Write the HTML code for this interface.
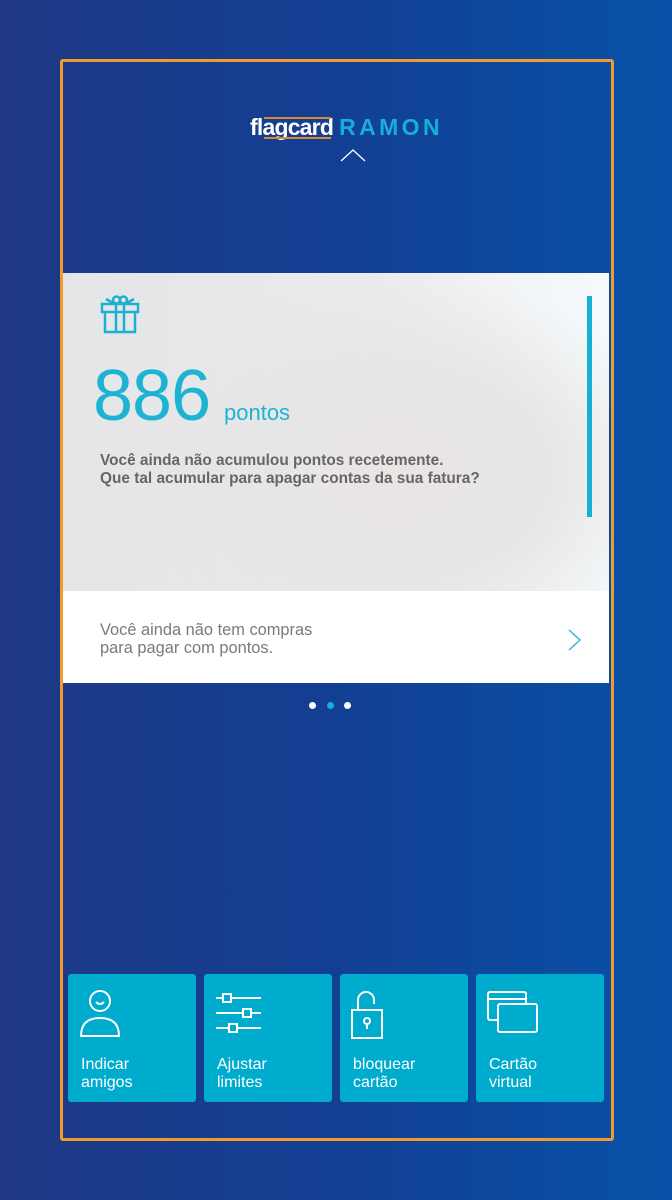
<!DOCTYPE html>
<html><head><meta charset="utf-8"><style>
*{margin:0;padding:0;box-sizing:border-box}
body{width:672px;height:1200px;overflow:hidden;font-family:"Liberation Sans",sans-serif;background:linear-gradient(90deg,#1e3885 0%,#133f93 50%,#0752a8 100%);position:relative}
.frame{position:absolute;left:60px;top:59px;width:554px;height:1082px;border:3px solid #f29a2e;border-radius:3px}
.logo{position:absolute;top:114px;left:250px;white-space:nowrap;font-size:23px;font-weight:bold}
.logo .f{color:#fff;letter-spacing:-0.8px;position:relative}
.logo .f:before{content:"";position:absolute;left:14px;right:2px;top:3px;height:2px;background:#d9892e}
.logo .f:after{content:"";position:absolute;left:14px;right:2px;bottom:1px;height:2px;background:#d9892e}
.logo .r{color:#19aed6;letter-spacing:3.4px;margin-left:6px}
.card{position:absolute;left:63px;top:273px;width:546px;height:318px;background:radial-gradient(ellipse 300px 200px at 330px 200px,#ebe5e4 0%,#e6e6e7 50%,rgba(230,230,232,0) 100%),linear-gradient(90deg,#e4e5e7 0%,#ececee 60%,#f6fafc 100%)}
.bar{position:absolute;left:587px;top:296px;width:5px;height:221px;background:#16b1d2}
.num{position:absolute;left:93px;top:355px;font-size:72px;color:#1db4d3;letter-spacing:-1px}
.pts{position:absolute;left:224px;top:400px;font-size:22px;color:#1db4d3}
.msg{position:absolute;left:100px;top:452px;font-size:15.4px;font-weight:bold;color:#666;line-height:18px;white-space:nowrap}
.white{position:absolute;left:63px;top:591px;width:546px;height:92px;background:#fff}
.wmsg{position:absolute;left:100px;top:621px;font-size:16.4px;color:#7a7a7a;line-height:18px}
.dot{position:absolute;top:702px;width:7px;height:7px;border-radius:50%;background:#fff}
.btn{position:absolute;top:974px;width:128px;height:128px;background:#00acce;border-radius:3px;color:#fff;font-size:16px;line-height:18px}
.btn span{position:absolute;left:13px;top:82px}
.btn svg{position:absolute;left:10px;top:14px}
</style></head><body>
<div class="frame"></div>
<div class="logo"><span class="f">flagcard</span><span class="r">RAMON</span></div>
<svg style="position:absolute;left:340px;top:148px" width="26" height="14"><path d="M1 13 L13 2 L25 13" stroke="#fff" stroke-width="1.3" fill="none"/></svg>
<div class="card"></div>
<svg style="position:absolute;left:99px;top:294px" width="42" height="42" viewBox="0 0 42 42" fill="none" stroke="#1cb0d1" stroke-width="2.5"><rect x="3" y="10" width="36" height="8"/><path d="M6 18 V38 H36 V18 M17 10 V38 M25 10 V38"/><circle cx="17.5" cy="6" r="3.5"/><circle cx="24.5" cy="6" r="3.5"/><path d="M14 9 L7 5 M28 9 L35 5"/></svg>
<div class="bar"></div>
<div class="num">886</div>
<div class="pts">pontos</div>
<div class="msg">Você ainda não acumulou pontos recetemente.<br>Que tal acumular para apagar contas da sua fatura?</div>
<div class="white"></div>
<div class="wmsg">Você ainda não tem compras<br>para pagar com pontos.</div>
<svg style="position:absolute;left:567px;top:628px" width="16" height="24"><path d="M2 2 L13 12 L2 22" stroke="#3bb4d3" stroke-width="1.5" fill="none"/></svg>
<div class="dot" style="left:309px"></div>
<div class="dot" style="left:327px;background:#19aed6"></div>
<div class="dot" style="left:344px"></div>
<div class="btn" style="left:68px"><svg width="44" height="50" viewBox="0 0 44 50" fill="none" stroke="#fff" stroke-width="2"><circle cx="22" cy="13" r="10"/><path d="M18 14 Q22 18 26 14"/><path d="M3 48 Q3 30 22 30 Q41 30 41 48 Z"/></svg><span>Indicar<br>amigos</span></div>
<div class="btn" style="left:204px"><svg width="50" height="46" viewBox="0 0 50 46" fill="none" stroke="#fff" stroke-width="2"><path d="M2 10 H9 M17 10 H47 M2 25 H29 M37 25 H47 M2 40 H15 M23 40 H47"/><rect x="9" y="6" width="8" height="8"/><rect x="29" y="21" width="8" height="8"/><rect x="15" y="36" width="8" height="8"/></svg><span>Ajustar<br>limites</span></div>
<div class="btn" style="left:340px"><svg width="40" height="52" viewBox="0 0 40 52" fill="none" stroke="#fff" stroke-width="2"><path d="M8 22 V12 A8 8 0 0 1 24 12 V16"/><rect x="2" y="22" width="30" height="28"/><circle cx="17" cy="33" r="3"/><path d="M17 36 V41"/></svg><span>bloquear<br>cartão</span></div>
<div class="btn" style="left:476px"><svg width="56" height="46" viewBox="0 0 56 46" fill="none" stroke="#fff" stroke-width="2"><path d="M12 32 H4 A2 2 0 0 1 2 30 V6 A2 2 0 0 1 4 4 H38 A2 2 0 0 1 40 6 V16"/><path d="M2 11 H40"/><rect x="12" y="16" width="39" height="28" rx="2"/></svg><span>Cartão<br>virtual</span></div>
</body></html>
